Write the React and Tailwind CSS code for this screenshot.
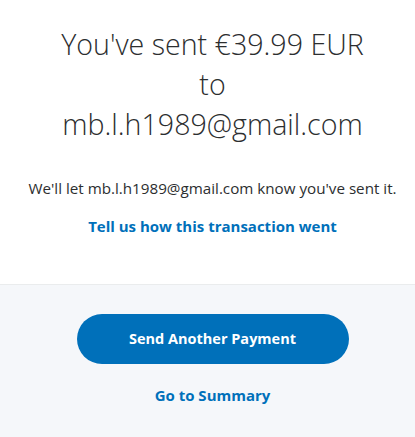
export default function App() {
  return (
    <div className="w-[415px] h-[437px] bg-white flex flex-col" style={{ fontFamily: '"Open Sans", "Liberation Sans", sans-serif' }}>
      <div className="flex flex-col items-center pt-[24px] pl-[10px] h-[284px]">
        <h1 className="text-[28.6px] leading-[40px] font-light text-[#2c2e2f] text-center w-[330px]">
          You've sent €39.99 EUR<br />to<br />mb.l.h1989@gmail.com
        </h1>
        <p className="mt-[34px] text-[15.2px] leading-[20px] text-[#2c2e2f] text-center whitespace-nowrap">
          We'll let mb.l.h1989@gmail.com know you've sent it.
        </p>
        <a className="mt-[18px] text-[15px] leading-[20px] font-bold text-[#0070ba]">
          Tell us how this transaction went
        </a>
      </div>
      <div className="flex-1 bg-[#f5f7fa] border-t border-[#eaeced] flex flex-col items-center pt-[29px] pl-[10px]">
        <button className="w-[272px] h-[50px] rounded-full bg-[#0070ba] text-white text-[14.5px] font-bold">
          Send Another Payment
        </button>
        <a className="mt-[21px] text-[15px] leading-[20px] font-bold text-[#0070ba]">Go to Summary</a>
      </div>
    </div>
  );
}
